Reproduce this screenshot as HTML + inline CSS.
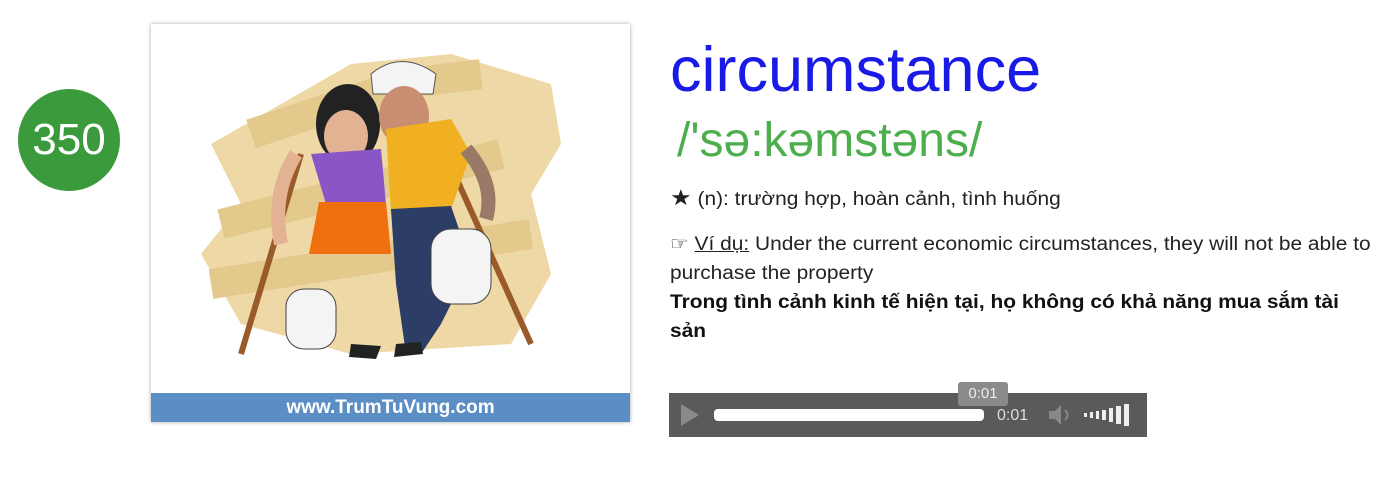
<!DOCTYPE html>
<html><head><meta charset="utf-8"><style>
body{margin:0;width:1393px;height:486px;background:#fff;position:relative;overflow:hidden;font-family:"Liberation Sans",Arial,sans-serif}
.badge{position:absolute;left:18px;top:89px;width:102px;height:102px;border-radius:50%;background:#3a9a3c;color:#fff;font-size:44px;line-height:102px;text-align:center}
.img{position:absolute;left:151px;top:24px;width:479px;height:398px;background:#fff;box-shadow:0 0 4px rgba(0,0,0,.35)}
.foot{position:absolute;left:0;bottom:0;width:479px;height:29px;background:#5b8ec4;color:#fff;font-weight:bold;font-size:19px;text-align:center;line-height:29px}
.w{position:absolute;left:670px;top:34px;font-size:63px;color:#1a1ae6}
.p{position:absolute;left:677px;top:113px;font-size:48px;color:#4cae4c}
.t{position:absolute;left:670px;font-size:19px;color:#222;transform:scaleX(1.1);transform-origin:0 0}
.pl{position:absolute;left:669px;top:393px;width:478px;height:44px;background:#5a5a5a}
</style></head><body>
<div class="badge">350</div>
<div class="img">
<svg width="479" height="369" viewBox="0 0 479 369">
<path d="M60 120 L200 40 L300 30 L400 60 L410 120 L380 170 L400 250 L360 320 L200 330 L90 300 L50 230 L90 180 Z" fill="#eed9a6"/>
<path d="M100 110 L250 60 L330 50 M70 200 L350 130 M60 260 L380 210" stroke="#e4c98c" stroke-width="30" fill="none"/>
<line x1="150" y1="130" x2="90" y2="330" stroke="#9a5a2a" stroke-width="6"/>
<line x1="290" y1="120" x2="380" y2="320" stroke="#9a5a2a" stroke-width="6"/>
<ellipse cx="197" cy="100" rx="32" ry="40" fill="#222"/>
<ellipse cx="195" cy="112" rx="22" ry="26" fill="#e2b292"/>
<path d="M220 50 Q250 25 285 50 L282 70 L222 70 Z" fill="#f4f4f4" stroke="#555"/>
<ellipse cx="253" cy="92" rx="25" ry="30" fill="#c98d72"/>
<path d="M160 130 L230 125 L235 180 L175 180 Z" fill="#8a55c4"/>
<path d="M168 178 L235 178 L240 230 L158 230 Z" fill="#f07010"/>
<path d="M235 105 L300 95 L320 130 L300 185 L240 190 Z" fill="#f0b022"/>
<path d="M240 185 L300 182 L320 240 L290 300 L270 330 L255 330 L245 260 Z" fill="#2c3d66"/>
<rect x="135" y="265" width="50" height="60" rx="18" fill="#f4f4f4" stroke="#444"/>
<rect x="280" y="205" width="60" height="75" rx="20" fill="#f4f4f4" stroke="#444"/>
<path d="M145 130 Q120 170 130 220" stroke="#e2b292" stroke-width="14" fill="none"/>
<path d="M315 125 Q345 160 335 195" stroke="#9a7a66" stroke-width="14" fill="none"/>
<path d="M200 320 L230 322 L225 335 L198 333Z M245 320 L270 318 L272 330 L243 333Z" fill="#222"/>
</svg>
<div class="foot">www.TrumTuVung.com</div>
</div>
<div class="w">circumstance</div>
<div class="p">/'sə:kəmstəns/</div>
<div class="t" style="top:185px"><span style="font-size:22px;color:#222">★</span> (n): trường hợp, hoàn cảnh, tình huống</div>
<div class="t" style="top:230px;width:643px;line-height:29px">☞ <u>Ví dụ:</u> Under the current economic circumstances, they will not be able to purchase the property<br><b style="color:#111">Trong tình cảnh kinh tế hiện tại, họ không có khả năng mua sắm tài sản</b></div>
<div class="pl">
<svg width="478" height="44">
<path d="M12 11 L30 22 L12 33Z" fill="#8a8a8a"/>
<rect x="45" y="16" width="270" height="12" rx="4" fill="#fff"/>
<text x="328" y="27" fill="#ddd" font-size="16" font-family="Liberation Sans">0:01</text>
<path d="M380 18 L386 18 L392 12 L392 32 L386 26 L380 26Z" fill="#888"/>
<path d="M396 17 Q401 22 396 27" stroke="#888" stroke-width="2" fill="none"/>
<g fill="#eee"><rect x="415" y="20" width="3" height="4"/><rect x="421" y="19" width="3" height="6"/><rect x="427" y="18" width="3" height="8"/><rect x="433" y="17" width="4" height="10"/><rect x="440" y="15" width="4" height="14"/><rect x="447" y="13" width="5" height="18"/><rect x="455" y="11" width="5" height="22"/></g>
</svg>
</div>
<div style="position:absolute;left:958px;top:382px;width:50px;height:24px;background:#8a8a8a;border-radius:3px;color:#eee;font-size:15px;text-align:center;line-height:24px">0:01</div>
</body></html>
